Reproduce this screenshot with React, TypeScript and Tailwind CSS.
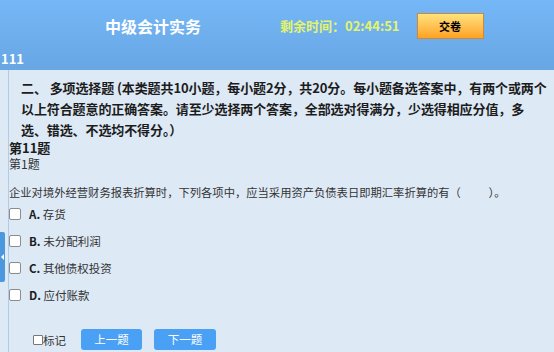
import * as React from 'react';

const options = [
  { key: 'A', text: '存货' },
  { key: 'B', text: '未分配利润' },
  { key: 'C', text: '其他债权投资' },
  { key: 'D', text: '应付账款' },
];

function Box({ small }: { small?: boolean }) {
  return (
    <span
      className={
        small
          ? 'inline-block h-[10px] w-[10px] shrink-0 rounded-[1px] border border-[#777] bg-white'
          : 'inline-block h-[12px] w-[12px] shrink-0 rounded-[2px] border border-[#8c8c8c] bg-white'
      }
    />
  );
}

export default function App() {
  return (
    <div className="h-[352px] w-[554px] overflow-hidden bg-[#dde9f5] font-['Noto_Sans_CJK_SC',sans-serif]">
      <header className="flex h-[70px] flex-col bg-gradient-to-b from-[#75b7f7] to-[#68a6e4]">
        <div className="mt-[13px] flex h-[26px] items-center">
          <h1 className="ml-[105px] text-[16px] leading-[20px] font-bold text-white">中级会计实务</h1>
          <span className="ml-[79px] text-[13px] leading-[16px] font-bold text-[#e4f46a]">剩余时间：02:44:51</span>
          <button className="ml-[17px] flex h-[26px] w-[67px] items-center justify-center border border-[#c88a40] bg-gradient-to-b from-[#ffe27a] to-[#ffa21c] text-[11px] font-bold text-black">
            交卷
          </button>
        </div>
        <div className="mt-[12px] pl-[1px] text-[13px] leading-[16px] font-bold text-white">111</div>
      </header>

      <div className="flex h-[282px]">
        <div className="flex w-[9px] shrink-0 flex-col border-r border-[#b3cbe6]">
          <div className="mt-[162px] flex h-[50px] w-[5px] items-center justify-center rounded-r-[2px] bg-[#4c98de]">
            <span className="h-0 w-0 border-y-[3px] border-r-[3px] border-y-transparent border-r-white" />
          </div>
        </div>

        <main className="flex min-w-0 flex-1 flex-col">
          <p className="pt-[7px] pl-[12px] text-[13px] leading-[21px] font-bold tracking-[-0.1px] whitespace-nowrap text-[#1c1c1c]">
            二、 多项选择题 (本类题共10小题，每小题2分，共20分。每小题备选答案中，有两个或两个
            <br />
            以上符合题意的正确答案。请至少选择两个答案，全部选对得满分，少选得相应分值，多
            <br />
            选、错选、不选均不得分。）
          </p>
          <div className="text-[13px] leading-[16px] font-bold text-[#1c1c1c]">第11题</div>
          <div className="text-[12px] leading-[16px] text-[#333]">第1题</div>
          <p className="mt-[12px] text-[11.3px] leading-[16px] text-[#333]">
            企业对境外经营财务报表折算时，下列各项中，应当采用资产负债表日即期汇率折算的有（　　&nbsp;&nbsp;）。
          </p>
          <div className="flex flex-col">
            {options.map((o) => (
              <label key={o.key} className="flex h-[27px] items-center">
                <Box />
                <span className="ml-[8px] text-[11.5px] leading-[16px] text-[#333]">
                  <b className="font-bold text-[#1c1c1c]">{o.key}.</b> {o.text}
                </span>
              </label>
            ))}
          </div>
          <div className="mt-[21px] flex items-center">
            <label className="ml-[24px] flex items-center">
              <Box small />
              <span className="text-[11.5px] leading-[16px] text-[#333]">标记</span>
            </label>
            <button className="ml-[15px] h-[21px] w-[61px] rounded-[3px] bg-[#4aa0f5] text-[11.5px] text-white">上一题</button>
            <button className="ml-[12px] h-[21px] w-[62px] rounded-[3px] bg-[#4aa0f5] text-[11.5px] text-white">下一题</button>
          </div>
        </main>
      </div>
    </div>
  );
}
